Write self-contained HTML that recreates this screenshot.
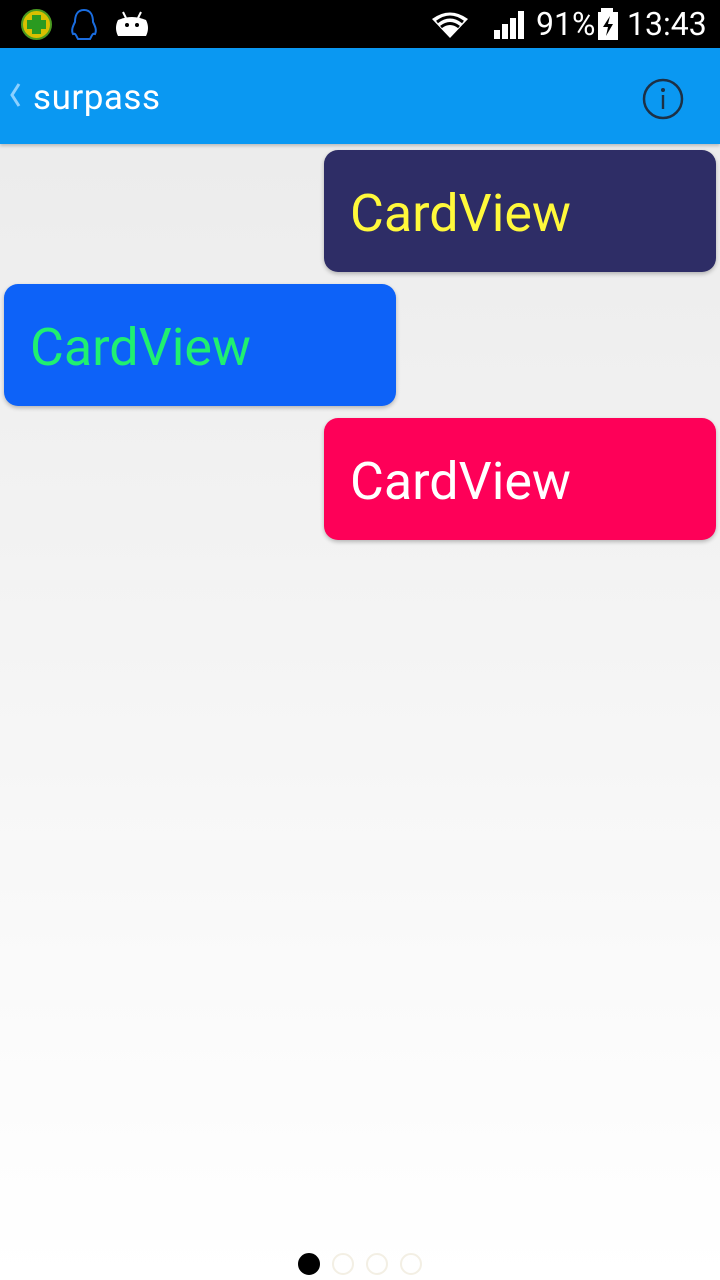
<!DOCTYPE html>
<html><head><style>
*{margin:0;padding:0;box-sizing:border-box}
body{width:720px;height:1280px;overflow:hidden;font-family:"Roboto","Liberation Sans",sans-serif;background:linear-gradient(#ececec 144px,#f0f0f0 400px,#fdfdfd 1150px,#fff);position:relative}
.sb{position:absolute;top:0;left:0;width:720px;height:48px;background:#000;color:#fff}
.tb{position:absolute;top:48px;left:0;width:720px;height:96px;background:#0a98f2;box-shadow:0 2px 3px rgba(0,0,0,.2)}
.card{position:absolute;height:122px;border-radius:14px;box-shadow:0 2px 4px rgba(0,0,0,.25);font-size:52px;line-height:128px;padding-left:26px}
.dot{position:absolute;top:1253px;width:22px;height:22px;border-radius:50%;border:2px solid #f3efe4}
</style></head><body>
<div class="sb">
<div style="position:absolute;left:21px;top:9px;width:31px;height:31px;border-radius:50%;background:#d8c000;border:2px solid #4a9a20"></div>
<div style="position:absolute;left:32px;top:15px;width:9px;height:19px;background:#2a9a20"></div>
<div style="position:absolute;left:27px;top:20px;width:19px;height:9px;background:#2a9a20"></div>
<svg style="position:absolute;left:68px;top:8px" width="32" height="34"><path d="M16 2C9 2 7 8 7 14 5 18 3 22 5 26 8 25 8 28 10 31H22C24 28 24 25 27 26 29 22 27 18 25 14 25 8 23 2 16 2Z" fill="none" stroke="#1a6de0" stroke-width="2"/></svg>
<svg style="position:absolute;left:114px;top:10px" width="36" height="28"><path d="M9 2l3 6M27 2l-3 6" stroke="#fff" stroke-width="2"/><path d="M4 10Q18 4 32 10Q36 18 32 26H4Q0 18 4 10Z" fill="#fff"/><circle cx="13" cy="15" r="2"/><circle cx="23" cy="15" r="2"/></svg>
<svg style="position:absolute;left:430px;top:10px" width="40" height="30"><path d="M20 28L2 9Q20-4 38 9Z" fill="#fff"/><path d="M7 12Q20 2 33 12M11 17Q20 10 29 17" stroke="#000" stroke-width="3" fill="none"/></svg>
<svg style="position:absolute;left:492px;top:10px" width="34" height="30"><rect x="2" y="20" width="6" height="9" fill="#fff"/><rect x="10" y="14" width="6" height="15" fill="#fff"/><rect x="18" y="8" width="6" height="21" fill="#fff"/><rect x="26" y="1" width="6" height="28" fill="#fff"/></svg>
<div style="position:absolute;left:536px;top:4px;font-size:32px;line-height:40px">91%</div>
<svg style="position:absolute;left:597px;top:8px" width="22" height="34"><rect x="4" y="0" width="12" height="4" fill="#fff"/><rect x="1" y="4" width="20" height="28" fill="#fff"/><path d="M13 8L6 19H11L9 28L16 16H11Z" fill="#000"/></svg>
<div style="position:absolute;left:627px;top:4px;font-size:32px;line-height:40px">13:43</div>
</div>
<div class="tb">
<svg style="position:absolute;left:8px;top:34px" width="14" height="26"><path d="M11 2L4 13L11 24" stroke="#8cd0ff" stroke-width="3" fill="none"/></svg>
<div style="position:absolute;left:33px;top:30px;color:#fff;font-size:35px;line-height:40px;letter-spacing:0.5px">surpass</div>
<svg style="position:absolute;left:641px;top:29px" width="44" height="44"><circle cx="22" cy="22" r="19" fill="none" stroke="#1d3045" stroke-width="2.5"/><circle cx="22" cy="13" r="2" fill="#1d3045"/><rect x="20.8" y="18" width="2.4" height="14" fill="#1d3045"/></svg>
</div>
<div class="card" style="left:324px;top:150px;width:392px;background:#2e2d66;color:#fff93b">CardView</div>
<div class="card" style="left:4px;top:284px;width:392px;background:#0d62f8;color:#20f070">CardView</div>
<div class="card" style="left:324px;top:418px;width:392px;background:#fe0058;color:#fff">CardView</div>
<div class="dot" style="left:298px;background:#000;border-color:#000"></div>
<div class="dot" style="left:332px"></div>
<div class="dot" style="left:366px"></div>
<div class="dot" style="left:400px"></div>
</body></html>
